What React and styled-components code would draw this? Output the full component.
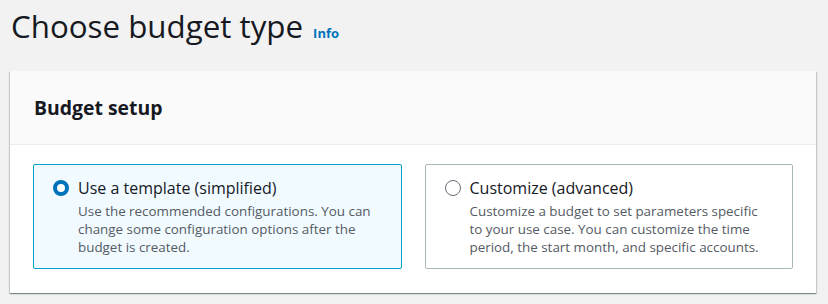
import React from "react";
import styled, { createGlobalStyle } from "styled-components";

const Global = createGlobalStyle`
  html, body { margin: 0; padding: 0; background: #f2f2f2; }
  body { font-family: "Open Sans", "Noto Sans", sans-serif; color: #16191f; }
`;

const Page = styled.div`
  width: 828px;
  height: 304px;
  overflow: hidden;
  box-sizing: border-box;
  padding: 6px 12px 0 10px;
`;

const TitleRow = styled.div`
  display: flex;
  align-items: baseline;
  gap: 10px;
  padding-left: 1px;
  height: 65px;
`;

const Title = styled.h1`
  margin: 0;
  font-size: 31.3px;
  font-weight: 400;
  line-height: 40px;
  color: #16191f;
`;

const InfoLink = styled.a`
  font-size: 13px;
  font-weight: 700;
  color: #0073bb;
  text-decoration: none;
`;

const Panel = styled.section`
  background: #fff;
  box-shadow: 0 1px 1px 0 rgba(0, 28, 36, 0.3), 1px 1px 1px 0 rgba(0, 28, 36, 0.15),
    -1px 1px 1px 0 rgba(0, 28, 36, 0.15);
`;

const PanelHeader = styled.div`
  background: #fafafa;
  border-bottom: 1px solid #eaeded;
  height: 74px;
  box-sizing: border-box;
  display: flex;
  align-items: center;
  padding: 0 24px;
`;

const PanelTitle = styled.h2`
  margin: 0;
  font-size: 19.4px;
  font-weight: 700;
  line-height: 24px;
`;

const PanelBody = styled.div`
  display: grid;
  grid-template-columns: 1fr 1fr;
  gap: 23px;
  padding: 19px 23px 24px;
`;

const Card = styled.label`
  display: flex;
  gap: 9px;
  height: 105px;
  box-sizing: border-box;
  padding: 12px 19px;
  border-radius: 2px;
  border: 1px solid ${(p) => (p.$selected ? "#00a1c9" : "#aab7b8")};
  background: ${(p) => (p.$selected ? "#f1faff" : "#fff")};
`;

const Radio = styled.span`
  flex: none;
  width: 16px;
  height: 16px;
  margin-top: 3px;
  border-radius: 50%;
  box-sizing: border-box;
  border: ${(p) => (p.$checked ? "4px solid #0073bb" : "1.5px solid #687078")};
  background: #fff;
`;

const Texts = styled.div`
  display: flex;
  flex-direction: column;
`;

const Label = styled.div`
  font-size: 16px;
  line-height: 22px;
  color: #16191f;
`;

const Desc = styled.div`
  margin-top: 3px;
  font-size: 13.4px;
  line-height: 18px;
  color: #545b64;
`;

const options = [
  {
    label: "Use a template (simplified)",
    desc: "Use the recommended configurations. You can change some configuration options after the budget is created.",
    selected: true,
  },
  {
    label: "Customize (advanced)",
    desc: "Customize a budget to set parameters specific to your use case. You can customize the time period, the start month, and specific accounts.",
    selected: false,
  },
];

export default function App() {
  return (
    <>
      <Global />
      <Page>
        <TitleRow>
          <Title>Choose budget type</Title>
          <InfoLink href="#">Info</InfoLink>
        </TitleRow>
        <Panel>
          <PanelHeader>
            <PanelTitle>Budget setup</PanelTitle>
          </PanelHeader>
          <PanelBody>
            {options.map((o) => (
              <Card key={o.label} $selected={o.selected}>
                <Radio $checked={o.selected} />
                <Texts>
                  <Label>{o.label}</Label>
                  <Desc>{o.desc}</Desc>
                </Texts>
              </Card>
            ))}
          </PanelBody>
        </Panel>
      </Page>
    </>
  );
}
